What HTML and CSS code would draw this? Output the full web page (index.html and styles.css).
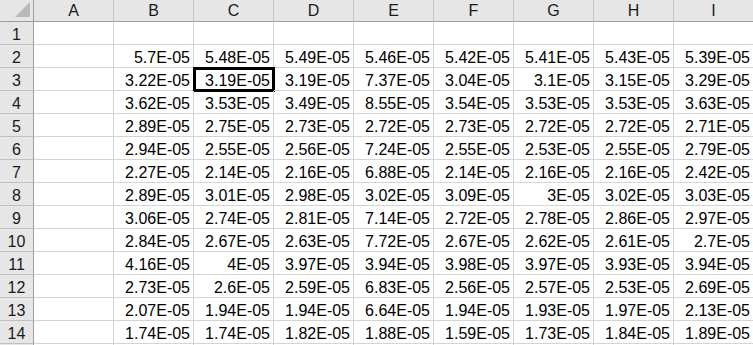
FILE: index.html
```html
<!DOCTYPE html>
<html lang="zh-CN">
<head>
<meta charset="utf-8">
<title>Sheet</title>
<link rel="stylesheet" href="styles.css">
</head>
<body>
<div class="sheet">
  <div class="corner"><span class="tri"></span></div>
  <div class="ch">A</div><div class="ch">B</div><div class="ch">C</div><div class="ch">D</div><div class="ch">E</div><div class="ch">F</div><div class="ch">G</div><div class="ch">H</div><div class="ch">I</div>

  <div class="rh">1</div><div class="c"></div><div class="c"></div><div class="c"></div><div class="c"></div><div class="c"></div><div class="c"></div><div class="c"></div><div class="c"></div><div class="c"></div>

  <div class="rh">2</div><div class="c"></div><div class="c">5.7E-05</div><div class="c">5.48E-05</div><div class="c">5.49E-05</div><div class="c">5.46E-05</div><div class="c">5.42E-05</div><div class="c">5.41E-05</div><div class="c">5.43E-05</div><div class="c">5.39E-05</div>

  <div class="rh">3</div><div class="c"></div><div class="c">3.22E-05</div><div class="c sel">3.19E-05</div><div class="c">3.19E-05</div><div class="c">7.37E-05</div><div class="c">3.04E-05</div><div class="c">3.1E-05</div><div class="c">3.15E-05</div><div class="c">3.29E-05</div>

  <div class="rh">4</div><div class="c"></div><div class="c">3.62E-05</div><div class="c">3.53E-05</div><div class="c">3.49E-05</div><div class="c">8.55E-05</div><div class="c">3.54E-05</div><div class="c">3.53E-05</div><div class="c">3.53E-05</div><div class="c">3.63E-05</div>

  <div class="rh">5</div><div class="c"></div><div class="c">2.89E-05</div><div class="c">2.75E-05</div><div class="c">2.73E-05</div><div class="c">2.72E-05</div><div class="c">2.73E-05</div><div class="c">2.72E-05</div><div class="c">2.72E-05</div><div class="c">2.71E-05</div>

  <div class="rh">6</div><div class="c"></div><div class="c">2.94E-05</div><div class="c">2.55E-05</div><div class="c">2.56E-05</div><div class="c">7.24E-05</div><div class="c">2.55E-05</div><div class="c">2.53E-05</div><div class="c">2.55E-05</div><div class="c">2.79E-05</div>

  <div class="rh">7</div><div class="c"></div><div class="c">2.27E-05</div><div class="c">2.14E-05</div><div class="c">2.16E-05</div><div class="c">6.88E-05</div><div class="c">2.14E-05</div><div class="c">2.16E-05</div><div class="c">2.16E-05</div><div class="c">2.42E-05</div>

  <div class="rh">8</div><div class="c"></div><div class="c">2.89E-05</div><div class="c">3.01E-05</div><div class="c">2.98E-05</div><div class="c">3.02E-05</div><div class="c">3.09E-05</div><div class="c">3E-05</div><div class="c">3.02E-05</div><div class="c">3.03E-05</div>

  <div class="rh">9</div><div class="c"></div><div class="c">3.06E-05</div><div class="c">2.74E-05</div><div class="c">2.81E-05</div><div class="c">7.14E-05</div><div class="c">2.72E-05</div><div class="c">2.78E-05</div><div class="c">2.86E-05</div><div class="c">2.97E-05</div>

  <div class="rh">10</div><div class="c"></div><div class="c">2.84E-05</div><div class="c">2.67E-05</div><div class="c">2.63E-05</div><div class="c">7.72E-05</div><div class="c">2.67E-05</div><div class="c">2.62E-05</div><div class="c">2.61E-05</div><div class="c">2.7E-05</div>

  <div class="rh">11</div><div class="c"></div><div class="c">4.16E-05</div><div class="c">4E-05</div><div class="c">3.97E-05</div><div class="c">3.94E-05</div><div class="c">3.98E-05</div><div class="c">3.97E-05</div><div class="c">3.93E-05</div><div class="c">3.94E-05</div>

  <div class="rh">12</div><div class="c"></div><div class="c">2.73E-05</div><div class="c">2.6E-05</div><div class="c">2.59E-05</div><div class="c">6.83E-05</div><div class="c">2.56E-05</div><div class="c">2.57E-05</div><div class="c">2.53E-05</div><div class="c">2.69E-05</div>

  <div class="rh">13</div><div class="c"></div><div class="c">2.07E-05</div><div class="c">1.94E-05</div><div class="c">1.94E-05</div><div class="c">6.64E-05</div><div class="c">1.94E-05</div><div class="c">1.93E-05</div><div class="c">1.97E-05</div><div class="c">2.13E-05</div>

  <div class="rh">14</div><div class="c"></div><div class="c">1.74E-05</div><div class="c">1.74E-05</div><div class="c">1.82E-05</div><div class="c">1.88E-05</div><div class="c">1.59E-05</div><div class="c">1.73E-05</div><div class="c">1.84E-05</div><div class="c">1.89E-05</div>

  <div class="rh"></div><div class="c"></div><div class="c"></div><div class="c"></div><div class="c"></div><div class="c"></div><div class="c"></div><div class="c"></div><div class="c"></div><div class="c"></div>
</div>
</body>
</html>
```

FILE: styles.css
```css
html, body {
  margin: 0;
  padding: 0;
  background: #ffffff;
  overflow: hidden;
}

.sheet {
  display: grid;
  grid-template-columns: 34px repeat(9, 80px);
  grid-template-rows: 22px repeat(15, 23px);
  width: 753px;
  height: 345px;
  overflow: hidden;
  font-family: "Liberation Sans", Arial, sans-serif;
  font-size: 16px;
  color: #000;
}

.corner {
  position: relative;
  background: #e6e6e6;
  border-right: 1px solid #9e9e9e;
  border-bottom: 1px solid #9e9e9e;
  box-sizing: border-box;
}

.tri {
  position: absolute;
  right: 3px;
  bottom: 4px;
  width: 0;
  height: 0;
  border-left: 15px solid transparent;
  border-bottom: 15px solid #b9b9b9;
}

.ch {
  background: #e6e6e6;
  border-right: 1px solid #c6c6c6;
  border-bottom: 1px solid #9e9e9e;
  box-sizing: border-box;
  display: flex;
  align-items: center;
  justify-content: center;
  line-height: 18px;
  padding-top: 1px;
  color: #1a1a1a;
}

.rh {
  background: #e6e6e6;
  border-right: 1px solid #9e9e9e;
  border-bottom: 1px solid #c0c0c0;
  box-sizing: border-box;
  display: flex;
  align-items: flex-end;
  justify-content: center;
  line-height: 18px;
  color: #1a1a1a;
}

.c {
  border-right: 1px solid #d4d4d4;
  border-bottom: 1px solid #d4d4d4;
  box-sizing: border-box;
  display: flex;
  align-items: flex-end;
  justify-content: flex-end;
  padding: 0 3px 0 0;
  line-height: 18px;
  white-space: nowrap;
}

.sel {
  outline: 3px solid #000;
  outline-offset: -2px;
}
```
